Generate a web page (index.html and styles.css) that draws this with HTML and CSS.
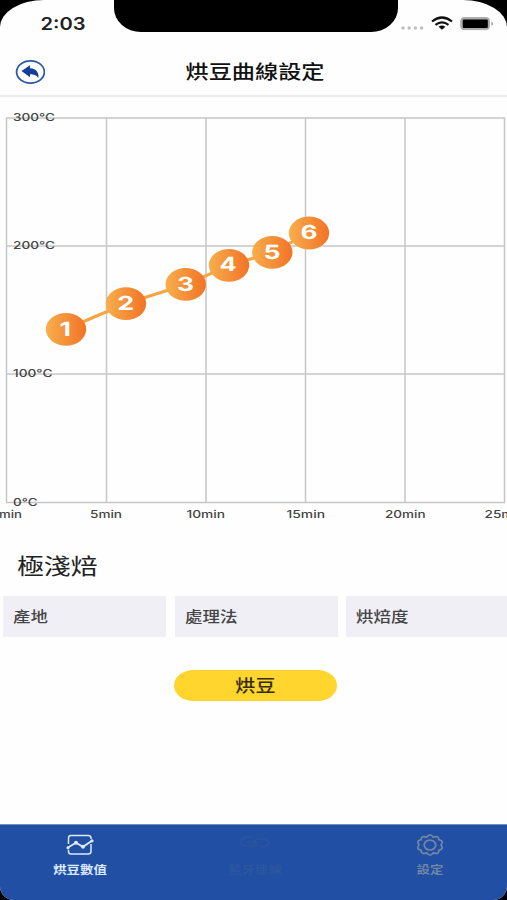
FILE: index.html
```html
<!DOCTYPE html>
<html lang="zh-Hant">
<head>
<meta charset="utf-8">
<title>烘豆曲線設定</title>
<link rel="stylesheet" href="styles.css">
</head>
<body>
<div class="phone">
  <header class="top">
    <div class="status">
      <svg class="time" width="46" height="18" viewBox="0 0 46 18"><text x="0.5" y="15" textLength="45" lengthAdjust="spacingAndGlyphs">2:03</text></svg>
      <div class="notch"></div>
      <svg class="signals" width="96" height="18" viewBox="0 0 96 18">
        <g fill="#bebebe"><circle cx="3" cy="13" r="1.7"/><circle cx="9.2" cy="13" r="1.7"/><circle cx="15.4" cy="13" r="1.7"/><circle cx="21.6" cy="13" r="1.7"/></g>
        <g fill="none" stroke="#111" stroke-width="2.2"><path d="M32 6.5Q42 -1.5 52 6.500"/><path d="M35.500 9.800Q42 4.800 48.500 9.800"/></g>
        <path d="M38.600 11.800Q42 9.300 45.400 11.800L42 14.700Z" fill="#111"/>
        <rect x="60.800" y="2.600" width="28.600" height="12" rx="3" fill="#aaa" stroke="#aaa" stroke-width="1"/>
        <rect x="62.800" y="4.400" width="25" height="8.600" rx="1" fill="#000"/>
        <path d="M91.500 6.800Q95 8.800 91.500 10.800Z" fill="#999"/>
      </svg>
    </div>
    <div class="nav">
      <svg class="back" width="30" height="24" viewBox="0 0 30 24">
        <ellipse cx="15.500" cy="12" rx="13.900" ry="11.100" fill="none" stroke="#2a59a8" stroke-width="1.800"/>
        <path d="M6.500 11L15 5.300V8.200C20.500 8.200 24 11.600 23.500 18C21 15 19 14.300 15 14.300V17.200Z" fill="#123f9b"/>
      </svg>
      <h1 class="title"><span>烘豆曲線設定</span></h1>
    </div>
  </header>
  <main>
    <svg class="chart" width="507" height="431" viewBox="0 97 507 431">
      <defs><linearGradient id="orange"><stop offset="0" stop-color="#f8ae4b"/><stop offset="1" stop-color="#f27327"/></linearGradient></defs>
      <g class="grid">
        <path d="M6.500 117.500V502.500M106.500 117.500V502.500M206 117.500V502.500M305.500 117.500V502.500M405 117.500V502.500M504.500 117.500V502.500"/>
        <path d="M6 118H505M6 246H505M6 374H505M6 502.500H505"/>
      </g>
      <g class="axis">
        <text x="13" y="121" textLength="42" lengthAdjust="spacingAndGlyphs">300°C</text>
        <text x="13" y="249" textLength="42" lengthAdjust="spacingAndGlyphs">200°C</text>
        <text x="13" y="377.300" textLength="39.500" lengthAdjust="spacingAndGlyphs">100°C</text>
        <text x="13" y="505.800" textLength="24.500" lengthAdjust="spacingAndGlyphs">0°C</text>
        <text x="-9.500" y="517.500" textLength="31.500" lengthAdjust="spacingAndGlyphs">0min</text>
        <text x="90" y="517.500" textLength="32" lengthAdjust="spacingAndGlyphs">5min</text>
        <text x="186.500" y="517.500" textLength="38.500" lengthAdjust="spacingAndGlyphs">10min</text>
        <text x="286.500" y="517.500" textLength="38.500" lengthAdjust="spacingAndGlyphs">15min</text>
        <text x="385" y="517.500" textLength="40.500" lengthAdjust="spacingAndGlyphs">20min</text>
        <text x="484.500" y="517.500" textLength="40.500" lengthAdjust="spacingAndGlyphs">25min</text>
      </g>
      <path class="curve" d="M66 329L126 303.500L186 284.500L229 265.500L272 252.500L309 233"/>
      <g fill="url(#orange)">
        <ellipse cx="66" cy="329.300" rx="20.200" ry="16.400"/><ellipse cx="126" cy="303.600" rx="20.200" ry="16.400"/><ellipse cx="185.700" cy="284.400" rx="20.200" ry="16.400"/><ellipse cx="229" cy="265.300" rx="20.200" ry="16.400"/><ellipse cx="272.300" cy="252.300" rx="20.200" ry="16.400"/><ellipse cx="309" cy="233" rx="20.200" ry="16.400"/>
      </g>
      <g class="points">
        <text x="59.500" y="335.500" textLength="11.500" lengthAdjust="spacingAndGlyphs">1</text>
        <text x="117.300" y="309.700" textLength="17" lengthAdjust="spacingAndGlyphs">2</text>
        <text x="177" y="290.500" textLength="17" lengthAdjust="spacingAndGlyphs">3</text>
        <text x="219.500" y="271.300" textLength="17" lengthAdjust="spacingAndGlyphs">4</text>
        <text x="263.500" y="258.500" textLength="17" lengthAdjust="spacingAndGlyphs">5</text>
        <text x="300.500" y="239" textLength="17" lengthAdjust="spacingAndGlyphs">6</text>
      </g>
    </svg>
    <h2 class="roast"><span>極淺焙</span></h2>
    <div class="fields"><div class="field"><span>產地</span></div><div class="field"><span>處理法</span></div><div class="field"><span>烘焙度</span></div></div>
    <button class="start"><span>烘豆</span></button>
  </main>
  <nav class="tabs">
    <div class="tab active">
      <svg width="28" height="22" viewBox="0 0 28 22" fill="none" stroke="currentColor" stroke-width="1.500">
        <path d="M2.500 10V4Q2.500 1.500 5 1.500H22Q25 1.500 25 4V5M2.500 16V17.500Q2.500 20 5 20H22Q25 20 25 17.500V10"/><path d="M1.500 13.800L10 8.800L17 12.800L26 6.800" stroke-width="1.900"/>
        <g fill="currentColor" stroke="none"><circle cx="2" cy="13.800" r="1.600"/><circle cx="10" cy="8.800" r="2"/><circle cx="17" cy="12.800" r="2"/><circle cx="26" cy="6.800" r="1.600"/></g>
      </svg><span>烘豆數值</span>
    </div>
    <div class="tab faint">
      <svg width="34" height="22" viewBox="0 0 34 22" fill="none" stroke="currentColor" stroke-width="1.500"><path d="M16 4Q6 1 3 7Q2 12 8 12H14Q19 12 18 8H9M15 8Q18 4 24 5Q31 6 31 10Q29 14 22 12"/></svg><span>藍牙連線</span>
    </div>
    <div class="tab muted">
      <svg width="28" height="22" viewBox="0 0 28 22" fill="none" stroke="currentColor" stroke-width="1.800"><path d="M10.600 3.200Q14 -1.400 17.400 3.200Q22.800 1.200 22.800 5.600Q28.400 6.800 25 11Q28.400 15.200 22.800 16.400Q22.800 20.800 17.400 18.800Q14 23.400 10.600 18.800Q5.200 20.800 5.200 16.400Q-.4 15.200 3 11Q-.4 6.800 5.200 5.600Q5.200 1.200 10.600 3.200Z"/><ellipse cx="14" cy="11" rx="5.800" ry="4.900"/></svg><span>設定</span>
    </div>
  </nav>
</div>
</body>
</html>
```
FILE: styles.css
```css
* { box-sizing: border-box; }
body { margin: 0; background: #000; font-family: Inter, "Noto Sans CJK TC", sans-serif; }
.phone { width: 507px; height: 900px; overflow: hidden; display: flex; flex-direction: column; background: #fefefe; border-radius: 44px 44px 14px 14px / 27px 27px 14px 14px; }
.top { height: 97px; border-bottom: 2px solid #ececec; }
.status { height: 48px; display: flex; align-items: flex-start; }
.time { margin: 15px 0 0 40px; overflow: visible; }
.time text { font-size: 17px; font-weight: 600; fill: #222; }
.notch { width: 284px; height: 32px; margin-left: 28px; flex: none; background: #000; border-radius: 0 0 27px 27px / 0 0 24px 24px; }
.signals { margin: 15px 0 0 2px; flex: none; }
.nav { display: grid; grid-template-columns: 48px 1fr 44px; align-items: center; height: 48px; }
.back { margin-left: 15px; }
.title { margin: 2px 0 0; text-align: center; font-size: 19px; font-weight: 500; line-height: 30px; color: #111; }
.title span, .roast span, .field span, .start span, .tab span { display: inline-block; transform: scaleX(1.22); }
.chart { display: block; }
.grid { fill: none; stroke: #c6c6c6; stroke-width: 1.5; }
.axis { font-size: 11px; font-weight: 500; fill: #444; }
.axis text, .points text { text-rendering: geometricPrecision; }
.curve { fill: none; stroke: #f7a441; stroke-width: 3; }
.points { font-family: Inter, sans-serif; font-size: 19.5px; font-weight: 700; fill: #fff; }
.roast { margin: 20px 0 0 17px; font-size: 22px; line-height: 36px; font-weight: 400; color: #222; }
.roast span, .field span { transform-origin: left; }
.fields { display: grid; grid-template-columns: 163px 163px 163px; gap: 8.5px; margin: 12px 0 0 3px; }
.field { height: 41px; padding-left: 10px; background: #f0eff6; font-size: 14.3px; line-height: 42px; font-weight: 500; color: #444; }
.start { display: block; width: 163px; height: 31px; margin: 33px 0 0 174px; padding: 0; border: 0; border-radius: 20px / 16px; background: #ffd52e; color: #352e08; font: 500 16.5px/29px "Noto Sans CJK TC", sans-serif; }
.tabs { display: grid; grid-template-columns: 160px 190px 160px; height: 76px; margin-top: auto; background: #204fa3; border-top: 1px solid #718dc0; }
.tab { display: flex; flex-direction: column; align-items: center; padding-top: 9px; font-size: 11px; line-height: 18px; font-weight: 700; }
.tab span { margin-top: 5px; }
.active { color: #dce8ff; }
.faint { color: #2a569f; }
.muted { color: #7186a6; }
```
